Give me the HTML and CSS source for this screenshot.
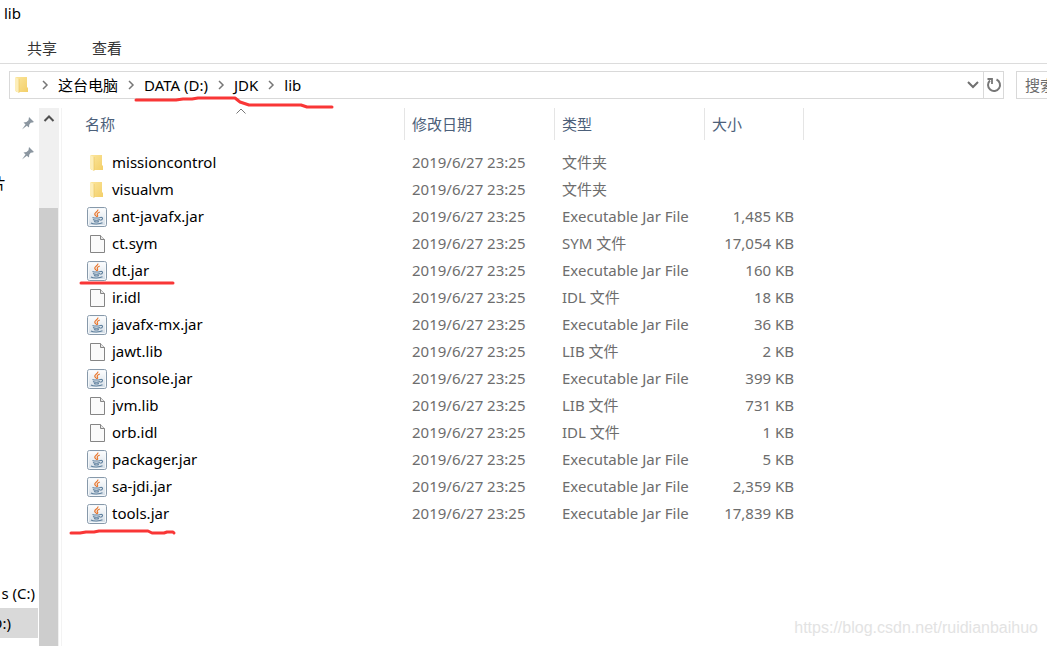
FILE: index.html
```
<!DOCTYPE html>
<html lang="zh-CN">
<head>
  <meta charset="UTF-8">
  <meta name="viewport" content="width=device-width, initial-scale=1.0">
  <title>lib</title>
  <link rel="stylesheet" href="styles.css">
</head>
<body>
  <svg class="defs" aria-hidden="true">
    <linearGradient id="folder-fill" x1="0" x2="1" y1="0" y2="1">
      <stop offset="0" stop-color="#fbe59b"/>
      <stop offset="1" stop-color="#f3cf69"/>
    </linearGradient>
    <linearGradient id="jar-fill" x1="0" x2="0" y1="0" y2="1">
      <stop offset="0" stop-color="#ffffff"/>
      <stop offset="1" stop-color="#d3dde6"/>
    </linearGradient>
    <symbol id="folder" viewBox="0 0 20 20">
      <path d="M4 2h11v10l1 1v4H4z" fill="url(#folder-fill)"/>
      <path d="M3 2l4 2v14l-4-2z" fill="#fdeeb9"/>
      <path d="M7 4v14" stroke="#e9c45c" stroke-width=".6"/>
    </symbol>
    <symbol id="file" viewBox="0 0 20 20">
      <path d="M3.5 1.5h10l4 4v13h-14z" fill="#fafafa" stroke="#858585"/>
      <path d="M13.500 1.500v4h4" fill="#e6e6e6" stroke="#858585"/>
    </symbol>
    <symbol id="jar" viewBox="0 0 20 20">
      <rect x=".5" y=".5" width="19" height="19" rx="2" fill="url(#jar-fill)" stroke="#8799aa"/>
      <rect x="1.500" y="1.500" width="17" height="17" rx="1" fill="none" stroke="#f4f8fb"/>
      <path d="M10.800 2.500c1 2-3.800 3-3 5 .3 1 1.800 1.600 2.200 2.500M12.800 5c-2 .8-3.300 1.900-2.300 3.200.5.7 0 1.300-.4 1.700" fill="none" stroke="#e8762d" stroke-width="1.200"/>
      <path d="M5.500 10.500c1.500.8 6 .7 8 0M6 12.500c1.500.8 5 .8 7 0M7 14.500c1.500.6 3.500.6 5 0M13.500 10.500c3-.6 2.500 2.500-.3 2.800M4 16c2 1.400 9 1.200 11.500-.2" fill="none" stroke="#5d7f9d" stroke-width="1.100"/>
    </symbol>
    <symbol id="pin" viewBox="0 0 14 14">
      <path d="M8 1l5 5-1.500.5-1.800.2-1.500 2L8 11.500 5.800 9.700 1 13.500 4.500 8.500 2.500 6.500l3-.5 2-1.800z" fill="#8b96a0"/>
    </symbol>
    <symbol id="chevron" viewBox="0 0 8 10">
      <path d="M2 1l4 4-4 4" fill="none" stroke="#777" stroke-width="1.500"/>
    </symbol>
  </svg>

  <header class="title">lib</header>
  <nav class="tabs">
    <button>共享</button>
    <button>查看</button>
  </nav>

  <div class="toolbar">
    <div class="address">
      <svg class="icon"><use href="#folder"/></svg>
      <svg class="chevron"><use href="#chevron"/></svg>
      <a href="#">这台电脑</a>
      <svg class="chevron"><use href="#chevron"/></svg>
      <a href="#">DATA (D:)</a>
      <svg class="chevron"><use href="#chevron"/></svg>
      <a href="#">JDK</a>
      <svg class="chevron"><use href="#chevron"/></svg>
      <a href="#">lib</a>
      <button class="history" aria-label="历史记录">
        <svg width="12" height="8" viewBox="0 0 12 8"><path d="M1 1l5 5 5-5" fill="none" stroke="#707070" stroke-width="2"/></svg>
      </button>
      <button class="refresh" aria-label="刷新">
        <svg width="16" height="16" viewBox="0 0 16 16">
          <path d="M10.500 2.500A6 6 0 1 1 4 3.500" fill="none" stroke="#777" stroke-width="2"/>
          <path d="M1.500 2H6v5" fill="none" stroke="#777" stroke-width="1.800"/>
        </svg>
      </button>
      <svg class="mark mark-path" width="200" height="14" viewBox="0 0 200 14">
        <path d="M2 4h40l7-1h9l6-1h37l5 4 9 3h52l6 2h25"/>
      </svg>
    </div>
    <input class="search" type="text" placeholder="搜索&quot;lib&quot;" aria-label="搜索">
  </div>

  <div class="content">
    <aside class="sidebar">
      <div class="side-row pinned"><svg class="pin"><use href="#pin"/></svg></div>
      <div class="side-row pinned"><svg class="pin"><use href="#pin"/></svg></div>
      <div class="side-row pictures">图片</div>
      <div class="side-row drive-c">s (C:)</div>
      <div class="side-row drive-d">D:)</div>
    </aside>
    <div class="scrollbar">
      <button class="scroll-up" aria-label="向上滚动">
        <svg width="12" height="8" viewBox="0 0 12 8"><path d="M1.500 7L6 2.500 10.500 7" fill="none" stroke="#505050" stroke-width="2"/></svg>
      </button>
      <div class="thumb"></div>
    </div>

    <main class="files">
      <table>
        <colgroup>
          <col class="col-name">
          <col class="col-date">
          <col class="col-type">
          <col class="col-size">
        </colgroup>
        <thead>
          <tr>
            <th>名称<svg class="sort" width="10" height="6" viewBox="0 0 10 6"><path d="M.5 5.500L5 1l4.500 4.500" fill="none" stroke="#777"/></svg></th>
            <th>修改日期</th>
            <th>类型</th>
            <th>大小</th>
          </tr>
        </thead>
        <tbody>
          <tr><td><div class="name"><svg class="icon"><use href="#folder"/></svg>missioncontrol</div></td><td>2019/6/27 23:25</td><td>文件夹</td><td></td></tr>
          <tr><td><div class="name"><svg class="icon"><use href="#folder"/></svg>visualvm</div></td><td>2019/6/27 23:25</td><td>文件夹</td><td></td></tr>
          <tr><td><div class="name"><svg class="icon"><use href="#jar"/></svg>ant-javafx.jar</div></td><td>2019/6/27 23:25</td><td>Executable Jar File</td><td>1,485 KB</td></tr>
          <tr><td><div class="name"><svg class="icon"><use href="#file"/></svg>ct.sym</div></td><td>2019/6/27 23:25</td><td>SYM 文件</td><td>17,054 KB</td></tr>
          <tr>
            <td>
              <div class="name"><svg class="icon"><use href="#jar"/></svg>dt.jar
                <svg class="mark mark-dt" width="98" height="6" viewBox="0 0 98 6"><path d="M2 3h92"/></svg>
              </div>
            </td>
            <td>2019/6/27 23:25</td><td>Executable Jar File</td><td>160 KB</td>
          </tr>
          <tr><td><div class="name"><svg class="icon"><use href="#file"/></svg>ir.idl</div></td><td>2019/6/27 23:25</td><td>IDL 文件</td><td>18 KB</td></tr>
          <tr><td><div class="name"><svg class="icon"><use href="#jar"/></svg>javafx-mx.jar</div></td><td>2019/6/27 23:25</td><td>Executable Jar File</td><td>36 KB</td></tr>
          <tr><td><div class="name"><svg class="icon"><use href="#file"/></svg>jawt.lib</div></td><td>2019/6/27 23:25</td><td>LIB 文件</td><td>2 KB</td></tr>
          <tr><td><div class="name"><svg class="icon"><use href="#jar"/></svg>jconsole.jar</div></td><td>2019/6/27 23:25</td><td>Executable Jar File</td><td>399 KB</td></tr>
          <tr><td><div class="name"><svg class="icon"><use href="#file"/></svg>jvm.lib</div></td><td>2019/6/27 23:25</td><td>LIB 文件</td><td>731 KB</td></tr>
          <tr><td><div class="name"><svg class="icon"><use href="#file"/></svg>orb.idl</div></td><td>2019/6/27 23:25</td><td>IDL 文件</td><td>1 KB</td></tr>
          <tr><td><div class="name"><svg class="icon"><use href="#jar"/></svg>packager.jar</div></td><td>2019/6/27 23:25</td><td>Executable Jar File</td><td>5 KB</td></tr>
          <tr><td><div class="name"><svg class="icon"><use href="#jar"/></svg>sa-jdi.jar</div></td><td>2019/6/27 23:25</td><td>Executable Jar File</td><td>2,359 KB</td></tr>
          <tr>
            <td>
              <div class="name"><svg class="icon"><use href="#jar"/></svg>tools.jar
                <svg class="mark mark-tools" width="110" height="8" viewBox="0 0 110 8"><path d="M3 5h9l6-1h8l5-1h49l4 2h12l3-1h6l1 1"/></svg>
              </div>
            </td>
            <td>2019/6/27 23:25</td><td>Executable Jar File</td><td>17,839 KB</td>
          </tr>
        </tbody>
      </table>
    </main>
  </div>
  <div class="watermark">https://blog.csdn.net/ruidianbaihuo</div>
</body>
</html>
```

FILE: styles.css
```
* {
  box-sizing: border-box;
}

body {
  display: flex;
  flex-direction: column;
  height: 100vh;
  margin: 0;
  overflow: hidden;
  background: #fff;
  color: #000;
  font-family: "Noto Sans", "Noto Sans CJK SC", sans-serif;
  font-size: 15px;
  line-height: 27px;
}

button,
input {
  padding: 0;
  border: 0;
  background: none;
  color: inherit;
  font: inherit;
}

svg {
  flex: none;
}

.defs {
  position: absolute;
  width: 0;
  height: 0;
}

.icon {
  width: 20px;
  height: 20px;
}

.mark {
  position: absolute;
  z-index: 1;
  fill: none;
  stroke: #f93636;
  stroke-width: 3px;
  stroke-linecap: round;
  stroke-linejoin: round;
}

.title {
  padding-left: 4px;
}

.tabs {
  display: flex;
  gap: 35px;
  height: 37px;
  padding: 7px 27px 0;
  border-bottom: 1px solid #dcdcdc;
  color: #333;
}

.toolbar {
  display: flex;
  gap: 12px;
  margin-top: 7px;
  padding-left: 9px;
}

.address {
  position: relative;
  display: flex;
  flex: 1;
  align-items: center;
  height: 28px;
  padding-left: 2px;
  border: 1px solid #d9d9d9;
}

.address a {
  color: #000;
  text-decoration: none;
}

.chevron {
  width: 8px;
  height: 10px;
  margin: 0 9px;
}

.history,
.refresh {
  display: flex;
  align-items: center;
  justify-content: center;
  width: 20px;
  height: 26px;
}

.history {
  margin-left: auto;
}

.refresh {
  border-left: 1px solid #d9d9d9;
}

.mark-path {
  top: 24px;
  left: 124px;
}

.search {
  width: 31px;
  height: 28px;
  padding-left: 8px;
  border: 1px solid #d9d9d9;
  border-right: 0;
}

.search::placeholder {
  color: #6d6d6d;
  opacity: 1;
}

.content {
  display: flex;
  flex: 1;
  min-height: 0;
  padding-top: 9px;
}

.sidebar {
  display: flex;
  flex-direction: column;
  width: 39px;
  overflow: hidden;
}

.side-row {
  display: flex;
  flex: none;
  align-items: center;
  justify-content: flex-end;
  height: 30px;
  margin-right: 1px;
  white-space: nowrap;
}

.pinned {
  padding-right: 3px;
}

.pin {
  width: 14px;
  height: 14px;
}

.pictures {
  padding-right: 32px;
}

.drive-c {
  margin-top: auto;
  padding-right: 3px;
}

.drive-d {
  margin-bottom: 8px;
  padding-right: 27px;
  background: #d9d9d9;
}

.scrollbar {
  display: flex;
  flex-direction: column;
  width: 20px;
  background: #f0f0f0;
}

.scroll-up {
  display: flex;
  align-items: center;
  justify-content: center;
  height: 20px;
}

.thumb {
  flex: 1;
  margin: 80px 1px 0 0;
  background: #cdcdcd;
}

.files {
  flex: 1;
  margin-left: 2px;
  padding-left: 16px;
  border-left: 1px solid #f3f3f3;
}

table {
  width: 726px;
  border-collapse: separate;
  border-spacing: 0;
  table-layout: fixed;
}

.col-name {
  width: 327px;
}

.col-date,
.col-type {
  width: 150px;
}

th {
  position: relative;
  height: 32px;
  padding: 0 7px;
  border-right: 1px solid #e5e5e5;
  color: #4c607a;
  font-weight: normal;
  text-align: left;
}

.sort {
  position: absolute;
  top: 0;
  left: calc(50% - 5px);
}

tbody::before {
  display: block;
  height: 9px;
  content: "";
}

td {
  height: 27px;
  padding: 0 7px;
  color: #6d6d6d;
  white-space: nowrap;
}

td:last-child {
  padding-right: 10px;
  text-align: right;
}

.name {
  position: relative;
  display: flex;
  gap: 5px;
  align-items: center;
  padding-left: 2px;
  color: #000;
}

.mark-dt {
  top: 23px;
  left: -6px;
}

.mark-tools {
  top: 28px;
  left: -17px;
}

.watermark {
  position: absolute;
  right: 9px;
  bottom: 5px;
  color: #e3e3e3;
  font-family: "Liberation Sans", sans-serif;
  font-size: 16px;
}
```
